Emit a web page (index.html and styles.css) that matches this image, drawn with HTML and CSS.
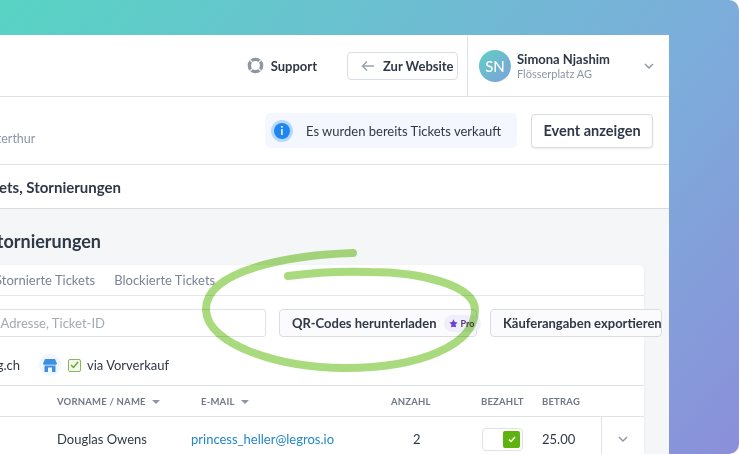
FILE: index.html
```html
<!DOCTYPE html>
<html lang="de">
<head>
    <meta charset="UTF-8">
    <title>Stornierungen</title>
    <link rel="stylesheet" href="styles.css">
</head>
<body>
    <div class="frame">
        <div class="panel">
            <header class="topbar">
                <a class="support">
                    <svg width="17" height="17" viewBox="0 0 18 18">
                        <circle cx="9" cy="9" r="6.5" fill="none" stroke="#8d96a5" stroke-width="3.6"/>
                        <path d="M3.5 3.5l3 3M14.5 3.5l-3 3M3.5 14.5l3-3M14.5 14.5l-3-3" stroke="#fff" stroke-width="1.3"/>
                    </svg>
                    Support
                </a>
                <button class="button back">
                    <svg width="14" height="12" viewBox="0 0 14 12">
                        <path d="M13 6H1.5M6 1.5L1.5 6 6 10.5" fill="none" stroke="#9aa2af" stroke-width="1.5"/>
                    </svg>
                    Zur Website
                </button>
                <div class="user">
                    <div class="avatar">SN</div>
                    <div class="user-text">
                        <div class="user-name">Simona Njashim</div>
                        <div class="user-org">Flösserplatz AG</div>
                    </div>
                    <svg class="chevron" width="10" height="6" viewBox="0 0 10 6">
                        <path d="M1 1l4 4 4-4" fill="none" stroke="#8d96a5" stroke-width="1.4"/>
                    </svg>
                </div>
            </header>

            <section class="event-bar">
                <div class="place">Winterthur</div>
                <div class="notice">
                    <span class="notice-icon">i</span>
                    Es wurden bereits Tickets verkauft
                </div>
                <button class="button show">Event anzeigen</button>
            </section>

            <div class="crumb"><span class="crumb-text">Tickets, Stornierungen</span></div>

            <main class="content">
                <h2>Tickets, Stornierungen</h2>
                <div class="card">
                    <nav class="tabs">
                        <span>Stornierte Tickets</span>
                        <span>Blockierte Tickets</span>
                    </nav>
                    <div class="filters">
                        <div class="search">Name, Adresse, Ticket-ID</div>
                        <button class="button action qr">
                            QR-Codes herunterladen
                            <span class="pro">
                                <svg width="9" height="9" viewBox="0 0 10 10">
                                    <path d="M5 .4l1.4 3 3.2.4-2.4 2.2.7 3.2L5 8.6 2.1 9.2l.7-3.2L.4 3.8l3.2-.4z" fill="#6b3fd4"/>
                                </svg>
                                Pro
                            </span>
                        </button>
                        <button class="button action export">Käuferangaben exportieren</button>
                    </div>
                    <div class="sources">
                        <span class="source-name">info@ticketing.ch</span>
                        <span class="store">
                            <svg width="14" height="13" viewBox="0 0 14 13">
                                <path d="M2 0h10l2 4.5a1.6 1.6 0 0 1-1 1.3H1A1.6 1.6 0 0 1 0 4.5z" fill="#3d8fe0"/>
                                <path d="M1.5 6.5h11V13H9V8.5H5V13H1.5z" fill="#3d8fe0"/>
                            </svg>
                        </span>
                        <span class="checkbox">
                            <svg width="9" height="8" viewBox="0 0 9 8">
                                <path d="M1 4l2.5 2.5L8 1" fill="none" stroke="#67a92e" stroke-width="1.5"/>
                            </svg>
                        </span>
                        <span>via Vorverkauf</span>
                    </div>
                    <div class="table-row table-head">
                        <span class="sort">Vorname / Name</span>
                        <span class="sort mail-head">E-Mail</span>
                        <span>Anzahl</span>
                        <span>Bezahlt</span>
                        <span>Betrag</span>
                        <span></span>
                    </div>
                    <div class="table-row table-body">
                        <span class="name">Douglas Owens</span>
                        <a class="mail">princess_heller@legros.io</a>
                        <span class="count">2</span>
                        <span class="toggle">
                            <span class="toggle-knob">
                                <svg width="8" height="7" viewBox="0 0 8 7">
                                    <path d="M1 3.5l2 2L7 1" fill="none" stroke="#fff" stroke-width="1.5"/>
                                </svg>
                            </span>
                        </span>
                        <span>25.00</span>
                        <span class="expand">
                            <svg width="10" height="6" viewBox="0 0 10 6">
                                <path d="M1 1l4 4 4-4" fill="none" stroke="#8d96a5" stroke-width="1.4"/>
                            </svg>
                        </span>
                    </div>
                </div>
            </main>
        </div>

        <svg class="scribble" width="739" height="454" viewBox="0 0 739 454">
            <path d="M353 253C290 255 205 270 206 310C207 345 280 368 345 368C420 368 475 345 475 310C475 285 420 272 370 272C340 271 310 273 288 276" fill="none" stroke="#a9db7e" stroke-width="8" stroke-linecap="round"/>
        </svg>
    </div>
</body>
</html>
```

FILE: styles.css
```css
* {
    box-sizing: border-box;
}

html, body {
    margin: 0;
    height: 100%;
    background-color: #fff;
    overflow: hidden;
}

body {
    font-family: Lato, "Noto Sans", Arial, sans-serif;
    font-size: 13px;
    color: #2f3846;
}

.frame {
    position: relative;
    height: 454px;
    padding-top: 35px;
    border-radius: 0 10px 10px 0;
    overflow: hidden;
    background: linear-gradient(130deg, #58d4c4 0%, #7caddb 66%, #8b8fd9 100%);
}

.panel {
    width: 900px;
    height: 419px;
    margin-left: -231px;
    background-color: #fff;
    overflow: hidden;
}

.button {
    font: inherit;
    font-weight: 700;
    white-space: nowrap;
    color: #2f3846;
    background-color: #fff;
    border: 1px solid #d9dde3;
    border-radius: 4px;
}

.topbar {
    display: flex;
    justify-content: flex-end;
    align-items: center;
    height: 62px;
    border-bottom: 1px solid #dfe2e7;
}

.support {
    display: flex;
    align-items: center;
    gap: 7px;
    font-weight: 700;
    margin-right: 30px;
}

.back {
    display: flex;
    align-items: center;
    gap: 8px;
    width: 111px;
    height: 28px;
    padding: 0 0 0 13px;
    margin-right: 9px;
}

.user {
    display: flex;
    align-items: center;
    width: 202px;
    height: 61px;
    padding: 0 15px 0 11px;
    border-left: 1px solid #dfe2e7;
}

.avatar {
    display: flex;
    justify-content: center;
    align-items: center;
    width: 32px;
    height: 32px;
    border-radius: 50%;
    color: #fff;
    font-size: 15px;
    font-weight: 500;
    background: linear-gradient(135deg, #5fd0c4, #7e9fdc);
}

.user-text {
    flex: 1;
    margin-left: 6px;
}

.user-name {
    font-weight: 700;
    line-height: 16px;
}

.user-org {
    font-size: 11px;
    line-height: 14px;
    color: #8d96a5;
}

.event-bar {
    display: flex;
    align-items: center;
    height: 68px;
    padding-right: 16px;
    border-bottom: 1px solid #dfe2e7;
}

.place {
    flex: 1;
    align-self: flex-end;
    padding: 0 0 18px 205px;
    font-size: 12.5px;
    color: #8d96a5;
}

.notice {
    display: flex;
    align-items: center;
    width: 252px;
    height: 35px;
    padding-left: 9px;
    margin-right: 14px;
    border-radius: 5px;
    background-color: #f4f8fe;
}

.notice-icon {
    display: flex;
    justify-content: center;
    align-items: center;
    width: 16px;
    height: 16px;
    margin-right: 16px;
    border-radius: 50%;
    font-size: 11px;
    font-weight: 700;
    color: #fff;
    background-color: #1f86f0;
    box-shadow: 0 0 0 3px #b5d8fb;
}

.show {
    width: 122px;
    height: 34px;
    font-size: 14.5px;
    box-shadow: 0 1px 2px rgba(0, 0, 0, 0.08);
}

.crumb {
    display: flex;
    align-items: center;
    height: 44px;
    border-bottom: 1px solid #d9dde3;
}

.crumb-text {
    display: flex;
    justify-content: flex-end;
    width: 352px;
    font-size: 15px;
    font-weight: 700;
    white-space: nowrap;
}

.content {
    height: 246px;
    padding: 20px 25px 0 191px;
    background-color: #f4f6f8;
}

h2 {
    display: flex;
    justify-content: flex-end;
    width: 141px;
    margin: 0 0 12px;
    font-size: 18px;
    font-weight: 700;
    line-height: 24px;
    white-space: nowrap;
}

.card {
    border-radius: 6px 6px 0 0;
    background-color: #fff;
    box-shadow: 0 1px 3px rgba(0, 0, 0, 0.06);
}

.tabs {
    display: flex;
    align-items: center;
    gap: 19px;
    height: 31px;
    padding-left: 35px;
    color: #7b8494;
    border-bottom: 1px solid #e3e6ea;
}

.filters {
    display: flex;
    align-items: center;
    gap: 13px;
    height: 54px;
    padding-right: 15px;
}

.search {
    display: flex;
    align-items: center;
    justify-content: flex-end;
    flex: 1;
    height: 28px;
    padding-right: 160px;
    white-space: nowrap;
    color: #a3aab5;
    border: 1px solid #dfe2e7;
    border-radius: 3px;
}

.action {
    display: flex;
    align-items: center;
    flex: none;
    height: 28px;
    padding: 0 12px;
    background-color: #fbfbfd;
}

.qr {
    width: 198px;
}

.export {
    width: 172px;
}

.pro {
    display: flex;
    align-items: center;
    gap: 3px;
    height: 17px;
    margin-left: 7px;
    padding: 0 7px 0 5px;
    border-radius: 9px;
    font-size: 9px;
    color: #55406f;
    background-color: #f1eefc;
}

.sources {
    display: flex;
    align-items: center;
    height: 35px;
    padding-bottom: 5px;
}

.source-name {
    display: flex;
    justify-content: flex-end;
    width: 60px;
    white-space: nowrap;
}

.store {
    display: flex;
    justify-content: center;
    align-items: center;
    width: 22px;
    height: 22px;
    margin-left: 19px;
    border-radius: 50%;
    background-color: #eff6fd;
}

.checkbox {
    display: flex;
    justify-content: center;
    align-items: center;
    width: 13px;
    height: 13px;
    margin: 0 6px 0 7px;
    border: 1px solid #85bb55;
    border-radius: 2px;
    background-color: #f5faef;
}

.table-row {
    display: grid;
    grid-template-columns: 134px 200px 90px 61px 59px 43px;
    align-items: center;
    padding-left: 97px;
}

.table-head {
    height: 32px;
    font-size: 9.5px;
    font-weight: 700;
    letter-spacing: 0.2px;
    text-transform: uppercase;
    color: #6f7887;
    border-top: 1px solid #dfe2e7;
    border-bottom: 1px solid #dfe2e7;
}

.sort::after {
    content: "";
    display: inline-block;
    margin-left: 6px;
    vertical-align: 1px;
    border-left: 4px solid transparent;
    border-right: 4px solid transparent;
    border-top: 4px solid #8d96a5;
}

.mail-head {
    padding-left: 10px;
}

.table-body {
    height: 44px;
}

.mail {
    color: #2387c9;
}

.count {
    padding-left: 22px;
}

.toggle {
    display: flex;
    justify-content: flex-end;
    width: 41px;
    height: 23px;
    margin-left: 1px;
    padding: 2px;
    border: 1px solid #dfe2e7;
    border-radius: 4px;
}

.toggle-knob {
    display: flex;
    justify-content: center;
    align-items: center;
    width: 17px;
    height: 17px;
    border-radius: 2px;
    background-color: #5fb30f;
}

.expand {
    display: flex;
    justify-content: center;
    align-items: center;
    height: 44px;
    border-left: 1px solid #dfe2e7;
}

/* handgezeichneter Kreis liegt über der Seite */
.scribble {
    position: absolute;
    top: 0;
    left: 0;
    mix-blend-mode: multiply;
}
```
